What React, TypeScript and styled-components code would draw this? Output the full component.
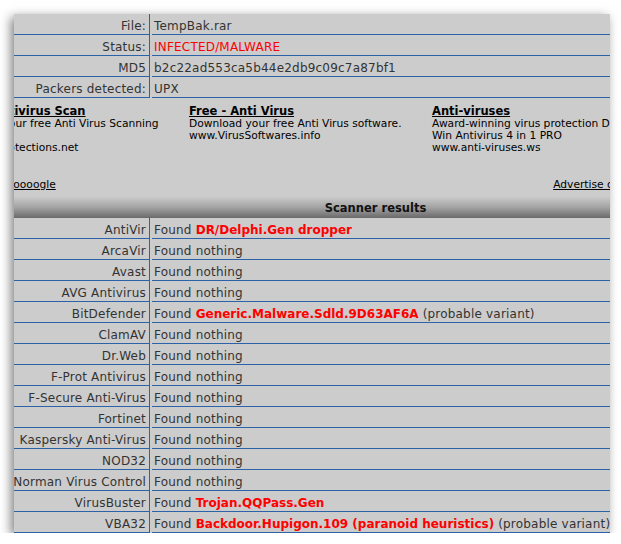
import { Fragment } from 'react';
import styled, { createGlobalStyle } from 'styled-components';

const GlobalStyle = createGlobalStyle`
  body {
    margin: 0;
    background: #ffffff;
    font-family: "DejaVu Sans", Verdana, sans-serif;
  }
`;

const Panel = styled.div`
  margin: 14px 0 0 14px;
  width: 596px;
  height: 519px;
  background: #cccccc;
  overflow: hidden;
  box-shadow: -3px 3px 10px rgba(0, 0, 0, 0.5);
  color: #333333;
`;

const Table = styled.div`
  display: grid;
  grid-template-columns: 136px 1fr;
  column-gap: 2px;
  font-size: 12px;
  letter-spacing: 0.2px;
`;

const Label = styled.div`
  display: flex;
  justify-content: flex-end;
  height: 15px;
  padding: 5px 3px 0 0;
  line-height: 15px;
  white-space: nowrap;
  overflow: hidden;
  border-right: 1px solid #2b62a8;
  border-bottom: 1px solid #2b62a8;
`;

const Value = styled.div<{ $alert?: boolean }>`
  height: 15px;
  padding: 5px 0 0 2px;
  line-height: 15px;
  white-space: nowrap;
  overflow: hidden;
  border-bottom: 1px solid #2b62a8;
  color: ${p => (p.$alert ? '#ff0000' : '#333333')};
`;

const Threat = styled.span`
  color: #ff0000;
  font-weight: bold;
  letter-spacing: 0;
`;

const AdsBlock = styled.div`
  margin-left: -68px;
  width: 720px;
  padding: 6px 0 6px;
  color: #000000;
`;

const AdsRow = styled.div`
  display: grid;
  grid-template-columns: 243px 243px 1fr;
`;

const Ad = styled.div`
  display: flex;
  flex-direction: column;
`;

const AdTitle = styled.a`
  font-size: 11.5px;
  line-height: 14px;
  font-weight: bold;
  color: #000000;
  text-decoration: underline;
  white-space: nowrap;
`;

const AdLine = styled.div`
  font-size: 10.7px;
  line-height: 12px;
  height: 12px;
  white-space: nowrap;
`;

const Footer = styled.div`
  display: flex;
  justify-content: space-between;
  margin-top: 25px;
  font-size: 10.7px;
  line-height: 12px;
`;

const FooterLink = styled.a`
  color: #000000;
  text-decoration: underline;
  white-space: nowrap;
`;

const SectionHeader = styled.div`
  height: 21px;
  box-sizing: border-box;
  padding: 1px 0 0 127px;
  line-height: 20px;
  text-align: center;
  font-size: 11.5px;
  font-weight: bold;
  color: #111111;
  background: linear-gradient(to bottom, #cacaca 0%, #a2a2a2 50%, #6a6a6a 100%);
`;

type Result = {
  name: string;
  threat?: string;
  variant?: boolean;
};

const info: [string, string, boolean?][] = [
  ['File:', 'TempBak.rar'],
  ['Status:', 'INFECTED/MALWARE', true],
  ['MD5', 'b2c22ad553ca5b44e2db9c09c7a87bf1'],
  ['Packers detected:', 'UPX'],
];

const results: Result[] = [
  { name: 'AntiVir', threat: 'DR/Delphi.Gen dropper' },
  { name: 'ArcaVir' },
  { name: 'Avast' },
  { name: 'AVG Antivirus' },
  { name: 'BitDefender', threat: 'Generic.Malware.Sdld.9D63AF6A', variant: true },
  { name: 'ClamAV' },
  { name: 'Dr.Web' },
  { name: 'F-Prot Antivirus' },
  { name: 'F-Secure Anti-Virus' },
  { name: 'Fortinet' },
  { name: 'Kaspersky Anti-Virus' },
  { name: 'NOD32' },
  { name: 'Norman Virus Control' },
  { name: 'VirusBuster', threat: 'Trojan.QQPass.Gen' },
  { name: 'VBA32', threat: 'Backdoor.Hupigon.109 (paranoid heuristics)', variant: true },
];

const ads = [
  {
    title: 'Online Antivirus Scan',
    lines: ['Download your free Anti Virus Scanning', 'Service', 'www.WebProtections.net'],
  },
  {
    title: 'Free - Anti Virus',
    lines: ['Download your free Anti Virus software.', 'www.VirusSoftwares.info'],
  },
  {
    title: 'Anti-viruses',
    lines: ['Award-winning virus protection Download now', 'Win Antivirus 4 in 1 PRO', 'www.anti-viruses.ws'],
  },
];

export default function App() {
  return (
    <>
      <GlobalStyle />
      <Panel>
        <Table>
          {info.map(([label, value, alert]) => (
            <Fragment key={label}>
              <Label>{label}</Label>
              <Value $alert={alert}>{value}</Value>
            </Fragment>
          ))}
        </Table>

        <AdsBlock>
          <AdsRow>
            {ads.map(ad => (
              <Ad key={ad.title}>
                <AdTitle href="#">{ad.title}</AdTitle>
                {ad.lines.map(line => (
                  <AdLine key={line}>{line}</AdLine>
                ))}
              </Ad>
            ))}
          </AdsRow>
          <Footer>
            <FooterLink href="#">Ads by Gooooooogle</FooterLink>
            <FooterLink href="#">Advertise on this site</FooterLink>
          </Footer>
        </AdsBlock>

        <SectionHeader>Scanner results</SectionHeader>

        <Table>
          {results.map(r => (
            <Fragment key={r.name}>
              <Label>{r.name}</Label>
              <Value>
                {r.threat ? (
                  <>
                    Found <Threat>{r.threat}</Threat>
                    {r.variant && ' (probable variant)'}
                  </>
                ) : (
                  'Found nothing'
                )}
              </Value>
            </Fragment>
          ))}
        </Table>
      </Panel>
    </>
  );
}
